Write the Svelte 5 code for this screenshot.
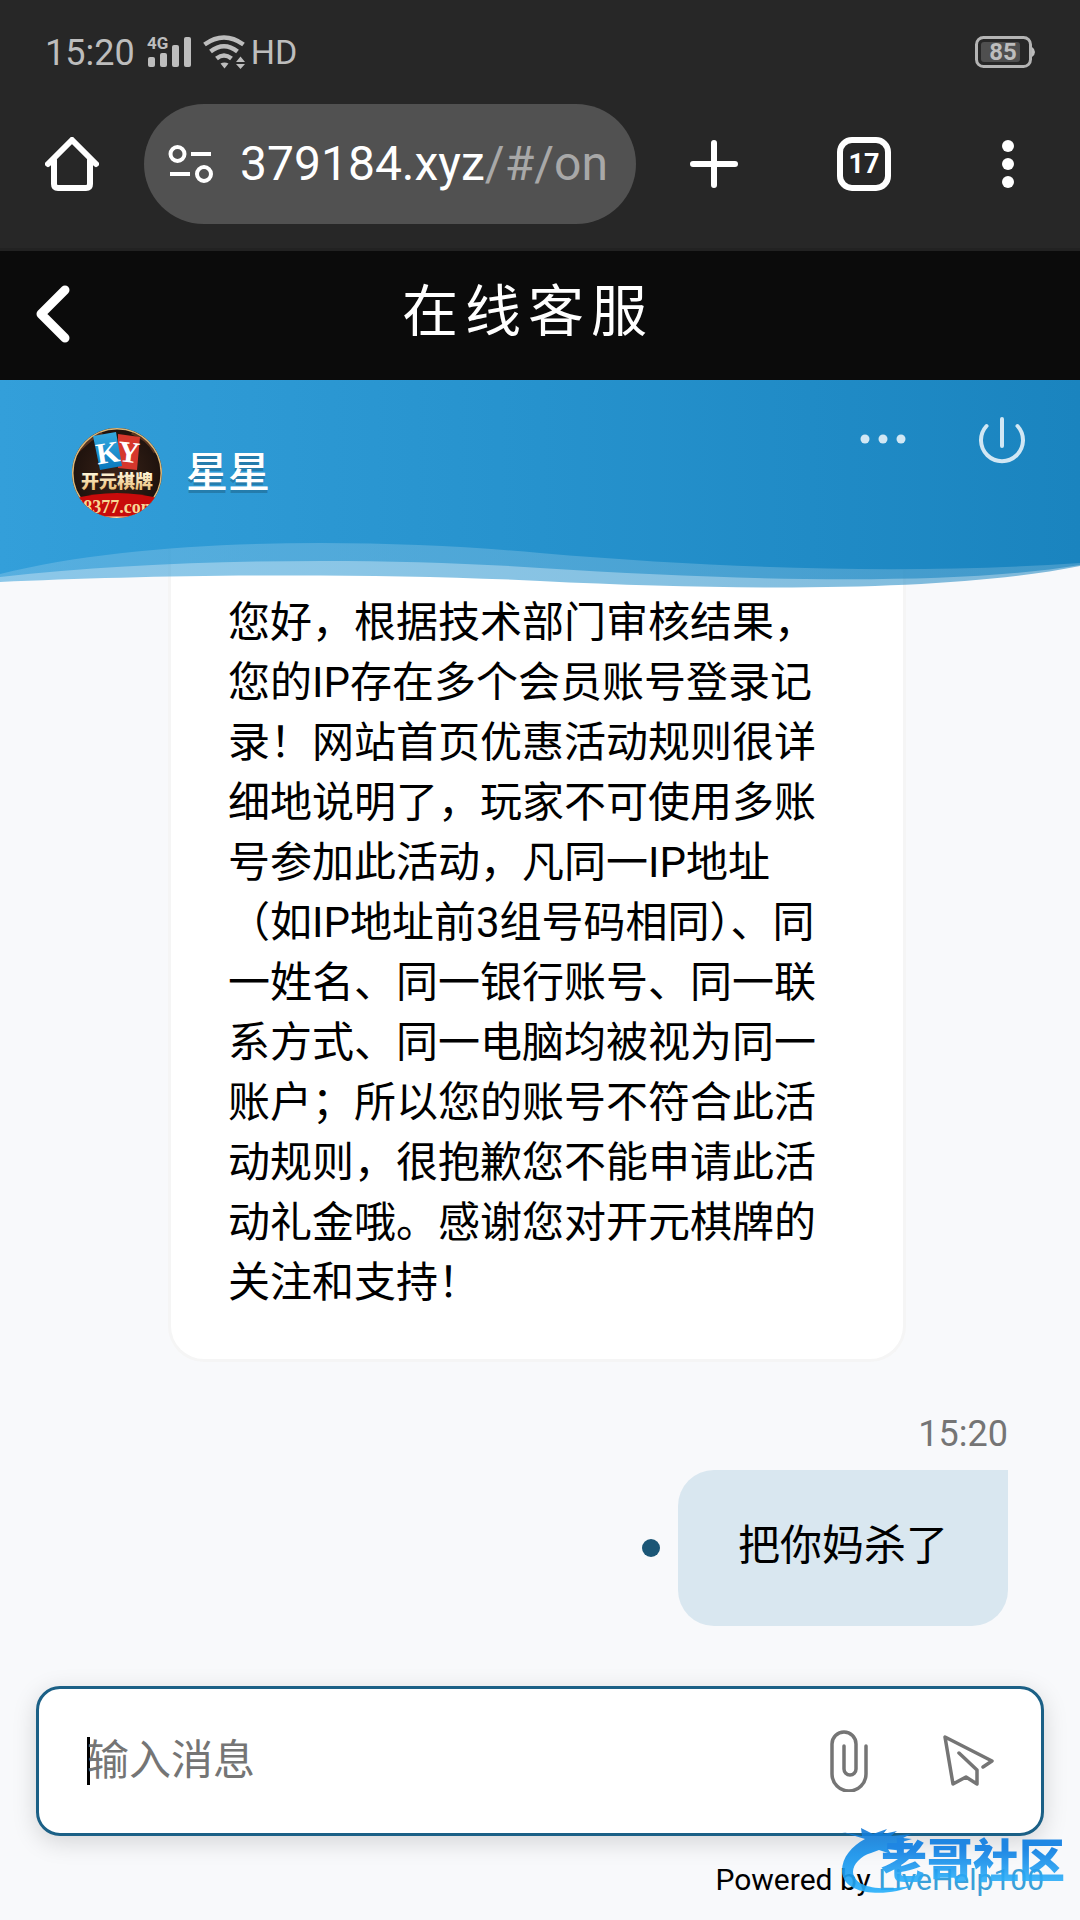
<script>
  let draft = $state('');
  const url = { host: '379184.xyz', path: '/#/on' };
  const agent = '星星';
  const reply =
    '您好，根据技术部门审核结果，您的IP存在多个会员账号登录记录！网站首页优惠活动规则很详细地说明了，玩家不可使用多账号参加此活动，凡同一IP地址（如IP地址前3组号码相同）、同一姓名、同一银行账号、同一联系方式、同一电脑均被视为同一账户；所以您的账号不符合此活动规则，很抱歉您不能申请此活动礼金哦。感谢您对开元棋牌的关注和支持！';
  const sent = { time: '15:20', text: '把你妈杀了' };
</script>

<div class="screen">
  <div class="status">
    <span class="clock">15:20</span>
    <svg class="signal" width="44" height="46" viewBox="0 -6 44 46" aria-hidden="true">
      <text x="0" y="14" class="net">4G</text>
      <rect x="1" y="22" width="7" height="10" rx="2" />
      <rect x="13" y="18" width="7" height="14" rx="2" />
      <rect x="25" y="10" width="7" height="22" rx="2" />
      <rect x="37" y="2" width="7" height="30" rx="2" />
    </svg>
    <svg class="wifi" width="42" height="34" viewBox="0 0 42 34" aria-hidden="true">
      <g fill="none" stroke="#bdbdbd" stroke-width="4.500">
        <path d="M1.500 9.500Q21-4.500 40.500 9.500" />
        <path d="M7.500 16.500Q21 6 34.500 16.500" />
        <path d="M13.500 23.500Q21 17.500 28.500 23.500" />
      </g>
      <path d="M17.500 28.500q4-2 8 0l-4 5zM33 27l4.500-5.500L42 27zM33 29h9l-4.500 5z" />
    </svg>
    <span class="hd">HD</span>
    <svg class="battery" width="60" height="32" viewBox="0 0 60 32" role="img" aria-label="85">
      <rect x="1.500" y="1.500" width="54" height="29" rx="7" fill="none" stroke="#b4b4b4" stroke-width="3" />
      <rect x="6" y="6" width="39" height="20" rx="3" fill="#4f4f4f" />
      <path d="M57 11q3 2 3 5t-3 5z" />
      <text x="28" y="24" text-anchor="middle" class="level">85</text>
    </svg>
  </div>

  <div class="browser">
    <button class="tool home" aria-label="主页">
      <svg width="54" height="54" viewBox="0 0 54 54" fill="none" stroke="#fff" stroke-width="6" stroke-linecap="round" stroke-linejoin="round">
        <path d="M3 27L27 3l24 24M9 23v24q0 4 4 4h28q4 0 4-4V23" />
      </svg>
    </button>
    <button class="address">
      <svg width="46" height="38" viewBox="0 0 46 38" fill="none" stroke="#fff" stroke-width="4" aria-hidden="true">
        <circle cx="9.500" cy="9" r="7" />
        <circle cx="36" cy="29" r="7" />
        <path d="M23 9h20M2 29h20" />
      </svg>
      <span class="url">{url.host}<span class="path">{url.path}</span></span>
    </button>
    <div class="tools">
      <button class="tool" aria-label="新标签页">
        <svg width="54" height="54" viewBox="0 0 54 54" stroke="#fff" stroke-width="6" stroke-linecap="round">
          <path d="M27 6v42M6 27h42" />
        </svg>
      </button>
      <button class="tool tabs">17</button>
      <button class="tool" aria-label="菜单">
        <svg width="42" height="54" viewBox="0 0 42 54" fill="#fff">
          <circle cx="21" cy="9" r="6" /><circle cx="21" cy="27" r="6" /><circle cx="21" cy="45" r="6" />
        </svg>
      </button>
    </div>
  </div>

  <div class="titlebar">
    <button class="tool" aria-label="返回">
      <svg width="36" height="60" viewBox="0 0 36 60" fill="none" stroke="#fff" stroke-width="9" stroke-linecap="round" stroke-linejoin="round">
        <path d="M31 6L7 30l24 24" />
      </svg>
    </button>
    <h1>在线客服</h1>
  </div>

  <header class="agent">
    <div class="agentrow">
      <svg class="avatar" width="90" height="90" viewBox="0 0 90 90" aria-hidden="true">
        <defs>
          <clipPath id="round"><circle cx="45" cy="45" r="45" /></clipPath>
          <radialGradient id="wood"><stop offset="0" stop-color="#3a2318" /><stop offset="1" stop-color="#1e120d" /></radialGradient>
          <linearGradient id="gold" x1="0" y1="0" x2="0" y2="1"><stop offset="0" stop-color="#fffbe2" /><stop offset="1" stop-color="#eab96d" /></linearGradient>
          <linearGradient id="cardblue" x1="0" y1="0" x2="0" y2="1"><stop offset="0" stop-color="#35a9df" /><stop offset="1" stop-color="#0878bd" /></linearGradient>
        </defs>
        <g clip-path="url(#round)">
          <rect width="90" height="90" fill="url(#wood)" />
          <path d="M6 22Q20 8 30 4M60 4Q76 10 84 24" stroke="#59331f" stroke-width="5" fill="none" />
          <circle cx="45" cy="45" r="44.500" fill="none" stroke="#d9b77a" stroke-width="2" />
          <path d="M46 6l22 3-3 33-19-2z" fill="#d6372c" />
          <path d="M21 8l23-4 6 34-22 4z" fill="url(#cardblue)" />
          <text x="24" y="35" class="letter" transform="rotate(-9 35 24)">K</text>
          <text x="46" y="34" class="letter" transform="rotate(6 56 24)">Y</text>
          <path d="M0 71Q45 59 90 71V90H0z" fill="#c80b0b" />
          <text x="45" y="60" text-anchor="middle" class="brand" fill="url(#gold)">开元棋牌</text>
          <text x="43" y="85" text-anchor="middle" class="site" fill="#f7d795">58377.com</text>
          <path d="M18 88.500h54v2H18z" fill="#f6e3ae" />
        </g>
      </svg>
      <h2>{agent}</h2>
      <div class="actions">
        <button class="tool" aria-label="更多">
          <svg width="48" height="48" viewBox="0 0 48 48" fill="#d1e7f4">
            <circle cx="6" cy="23" r="4.500" /><circle cx="24" cy="23" r="4.500" /><circle cx="42" cy="23" r="4.500" />
          </svg>
        </button>
        <button class="tool" aria-label="结束对话">
          <svg width="48" height="48" viewBox="0 0 48 48" fill="none" stroke="#d1e7f4" stroke-width="4" stroke-linecap="round">
            <path d="M24 3v27M8.500 10A21 21 0 1 0 39.500 10" />
          </svg>
        </button>
      </div>
    </div>
    <svg class="wave" viewBox="0 0 1080 50" preserveAspectRatio="none" aria-hidden="true">
      <defs>
        <linearGradient id="sea" gradientUnits="userSpaceOnUse" x1="0" y1="0" x2="1080" y2="0">
          <stop offset="0" stop-color="#339fda" /><stop offset="0.500" stop-color="#2692cd" /><stop offset="1" stop-color="#1a84bf" />
        </linearGradient>
      </defs>
      <g fill="url(#sea)">
        <path opacity="0.550" d="M0 0V42C150 35 360 32 540 41C760 52 960 50 1080 26V0z" />
        <path opacity="0.600" d="M0 0V37C170 18 380 17 540 28C760 42 960 45 1080 25V0z" />
        <path d="M0 0V34C150 -4 380 -2 540 13C740 30 920 34 1080 23V0z" />
      </g>
    </svg>
  </header>

  <main>
    <p class="reply">{reply}</p>
    <div class="mine">
      <time>{sent.time}</time>
      <div class="sent">
        <span class="dot"></span>
        <p class="bubble">{sent.text}</p>
      </div>
    </div>
  </main>

  <form class="composer" onsubmit={(e) => e.preventDefault()}>
    <span class="caret"></span>
    <input type="text" placeholder="输入消息" aria-label="输入消息" bind:value={draft} />
    <button class="tool" type="button" aria-label="附件">
      <svg width="60" height="62" viewBox="0 0 60 62" fill="none" stroke="#757575" stroke-width="3.500" stroke-linecap="round">
        <path d="M47 16v28a17 17 0 0 1-34 0V14a12 12 0 0 1 24 0v25a6 6 0 0 1-12 0V16" />
      </svg>
    </button>
    <button class="tool" type="submit" aria-label="发送">
      <svg width="60" height="62" viewBox="0 0 60 62" fill="none" stroke="#757575" stroke-width="3.500" stroke-linecap="round" stroke-linejoin="round">
        <path d="M44 37l9-6L6 7l8 47 13-7 11 7V40L20 23" />
      </svg>
    </button>
  </form>

  <footer>
    Powered by <a href="#livehelp">LiveHelp100</a>
    <div class="mark">
      <svg width="80" height="78" viewBox="0 0 80 78" aria-hidden="true">
        <defs>
          <linearGradient id="swirl" x1="0" y1="0" x2="0" y2="1"><stop offset="0" stop-color="#1477d4" /><stop offset="0.400" stop-color="#1290ea" /><stop offset="1" stop-color="#27b0fb" /></linearGradient>
        </defs>
        <path fill="url(#swirl)" d="M1 10l20 4-1-8 12 6 14-5-4 5 14-3-6 5 20-2-8 4 9 1-10 3 8 3-12 1 4 5-14-2 3 5-12-4-8 3C20 34 12 42 12 50c1 14 22 20 58 14-18 10-68 12-69-15C1 35 11 24 24 17z" />
      </svg>
      <span>老哥社区</span>
    </div>
  </footer>
</div>

<style>
  :global(body) {
    margin: 0;
    background: #f8f9fb;
  }
  .screen {
    min-height: 100vh;
    display: flex;
    flex-direction: column;
    background: #f8f9fb;
    color: #000;
    font-family: Roboto, 'Noto Sans CJK SC', sans-serif;
    font-size: 42px;
    line-height: 60px;
    overflow: hidden;
  }
  h1, h2, p { margin: 0; }
  button {
    border: 0;
    padding: 0;
    background: none;
    color: inherit;
    font: inherit;
  }
  svg { display: block; }
  .tool {
    display: flex;
    align-items: center;
    justify-content: center;
  }

  .status {
    display: flex;
    align-items: center;
    height: 104px;
    box-sizing: border-box;
    padding: 0 45px;
    background: #272727;
    color: #bdbdbd;
    font-size: 36px;
  }
  .status svg { fill: #bdbdbd; }
  .clock { padding-top: 2px; }
  .hd { font-size: 34px; }
  .net { font-size: 17px; font-weight: 700; }
  .level { font-size: 24px; font-weight: 700; }
  .signal { margin-left: 12px; }
  .wifi { margin: 0 6px 0 12px; }
  .battery { margin-left: auto; }

  .browser {
    display: flex;
    align-items: center;
    height: 147px;
    box-sizing: border-box;
    padding: 0 51px 24px 45px;
    border-bottom: 3px solid #222;
    background: #272727;
    color: #fff;
  }
  .address {
    flex: 1;
    min-width: 0;
    display: flex;
    align-items: center;
    gap: 26px;
    height: 120px;
    margin: 0 51px 0 45px;
    padding: 0 24px;
    border-radius: 60px;
    background: #515151;
    overflow: hidden;
  }
  .address svg { flex: none; }
  .url { font-size: 48px; white-space: nowrap; }
  .path { color: #a8a8a8; }
  .tools { display: flex; gap: 96px; }
  .tabs {
    width: 54px;
    height: 54px;
    box-sizing: border-box;
    border: 6px solid #fff;
    border-radius: 15px;
    font-size: 27px;
    font-weight: 700;
  }

  .titlebar {
    display: flex;
    align-items: center;
    height: 129px;
    box-sizing: border-box;
    padding: 0 94px 4px 34px;
    background: #0b0b0b;
    color: #fff;
  }
  h1 {
    flex: 1;
    padding-bottom: 4px;
    text-align: center;
    font-size: 56px;
    font-weight: 400;
    letter-spacing: 7px;
  }

  .agent {
    position: relative;
    z-index: 1;
    color: #fff;
  }
  .agentrow {
    display: flex;
    align-items: center;
    height: 160px;
    box-sizing: border-box;
    padding: 26px 54px 0 72px;
    background: linear-gradient(90deg, #339fda, #2692cd 50%, #1a84bf);
  }
  h2 {
    margin-left: 24px;
    font-size: 42px;
    font-weight: 500;
    text-shadow: 0 3px 0 rgba(0, 0, 0, 0.2);
  }
  .actions {
    display: flex;
    align-self: flex-start;
    gap: 71px;
    margin: 10px 0 0 auto;
  }
  .wave { width: 100%; height: 50px; }
  .letter { font: 700 30px 'Liberation Serif', serif; fill: #fff; }
  .brand { font-size: 18px; font-weight: 900; }
  .site { font: 700 18px 'Liberation Serif', serif; }

  main {
    flex: 1;
    display: flex;
    flex-direction: column;
    margin-top: -50px;
    padding: 0 72px;
  }
  .reply {
    margin: 0 102px 0 96px;
    padding: 53px 57px 46px;
    border: 3px solid #f5f5f5;
    border-top: 0;
    border-radius: 0 0 36px 36px;
    background: #fff;
  }
  .mine {
    display: flex;
    flex-direction: column;
    align-items: flex-end;
    margin-top: 42px;
  }
  time {
    color: #757575;
    font-size: 36px;
    margin-bottom: 6px;
  }
  .sent {
    display: flex;
    align-items: center;
    gap: 18px;
  }
  .dot {
    width: 18px;
    height: 18px;
    border-radius: 50%;
    background: #1b5676;
  }
  .bubble {
    padding: 46px 60px 50px;
    border-radius: 36px 0 36px 36px;
    background: #d9e7f0;
  }

  .composer {
    display: flex;
    align-items: center;
    height: 150px;
    box-sizing: border-box;
    margin: 0 36px;
    padding: 0 42px 0 48px;
    border: 3px solid #1b6086;
    border-radius: 24px;
    background: #fff;
    box-shadow: 0 6px 24px rgba(0, 0, 0, 0.15);
  }
  .caret { width: 3px; height: 48px; margin-right: -3px; background: #000; }
  input {
    flex: 1;
    min-width: 0;
    height: 60px;
    border: 0;
    padding: 0;
    outline: 0;
    background: none;
    color: #000;
    font: inherit;
  }
  input::placeholder { color: #757575; opacity: 1; }
  .composer .tool + .tool { margin-left: 60px; }

  footer {
    position: relative;
    height: 84px;
    box-sizing: border-box;
    padding: 14px 36px 0;
    text-align: right;
    font-size: 30px;
  }
  a { color: #3a9fd8; text-decoration: none; }
  .mark {
    position: absolute;
    right: 15px;
    top: -14px;
    display: flex;
    align-items: center;
    opacity: 0.9;
  }
  .mark span {
    margin-left: -40px;
    background: linear-gradient(#0a7ce2 30%, #2badf8 80%);
    background-clip: text;
    color: transparent;
    font-size: 46px;
    font-weight: 900;
  }
</style>
